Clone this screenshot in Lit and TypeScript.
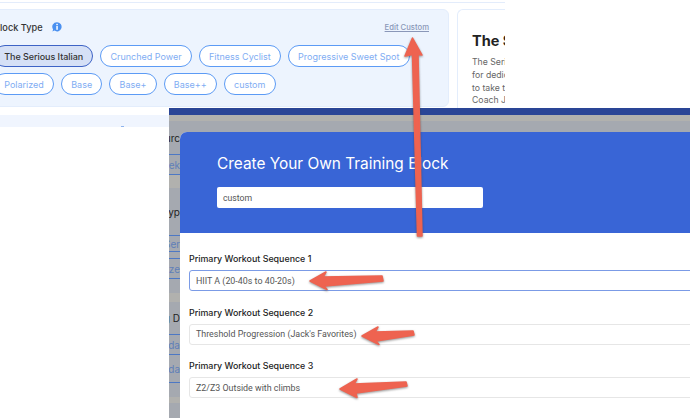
import { LitElement, css, html, svg } from "lit";
import { customElement } from "lit/decorators.js";

const row1 = ["The Serious Italian", "Crunched Power", "Fitness Cyclist", "Progressive Sweet Spot"];
const row2 = ["Polarized", "Base", "Base+", "Base++", "custom"];

const sequences = [
  { label: "Primary Workout Sequence 1", value: "HIIT A (20-40s to 40-20s)", focused: true },
  { label: "Primary Workout Sequence 2", value: "Threshold Progression (Jack's Favorites)", focused: false },
  { label: "Primary Workout Sequence 3", value: "Z2/Z3 Outside with climbs", focused: false },
];

const arrows = [
  "M412.5 38 L422 55 L418 54.5 L422 236 L417.5 236 L412.5 54.5 L405 56 Z",
  "M310 281 L326 272 L323 277 L382 276 L383 281 L324 286 L327 289.5 Z",
  "M362 336 L378 327 L375 332 L413 331 L414 335 L376 341 L379 344.5 Z",
  "M340 389 L357 379 L354 384 L406 382 L407 386 L356 393 L357 397.5 Z",
];

@customElement("app-root")
export class AppRoot extends LitElement {
  static styles = css`
    :host {
      display: block;
      width: 690px;
      height: 418px;
      background: #fff;
      overflow: hidden;
      position: relative;
      font-family: "Inter", "Liberation Sans", sans-serif;
    }
    .top-shot {
      width: 505px;
      height: 108px;
      overflow: hidden;
      display: flex;
      gap: 8px;
      padding-top: 9px;
      box-sizing: border-box;
      border-top: 1px solid transparent;
      position: relative;
    }
    .top-line {
      position: absolute;
      left: 0;
      top: 1px;
      width: 505px;
      height: 1px;
      background: #e3ecfb;
    }
    .panel {
      flex: none;
      width: 469px;
      height: 98px;
      margin-left: -20px;
      margin-top: -1px;
      box-sizing: border-box;
      padding: 10px 19px 0 13px;
      background: #edf4fe;
      border: 1px solid #e3edfc;
      border-radius: 6px;
    }
    .panel-head {
      display: flex;
      align-items: center;
      height: 15px;
      margin-bottom: 10px;
      color: #333;
      font-size: 9.2px;
      font-weight: 500;
    }
    .panel-head svg {
      margin-left: 9px;
      margin-top: -2px;
    }
    .edit {
      margin-left: auto;
      color: #8a97b8;
      font-size: 7.7px;
      font-weight: 500;
      text-decoration: underline;
    }
    .chips {
      display: flex;
      gap: 7px;
      margin-bottom: 6px;
    }
    .chip {
      height: 22px;
      box-sizing: border-box;
      padding: 0 9.2px;
      display: flex;
      align-items: center;
      border: 1.2px solid #5c9bf5;
      border-radius: 11px;
      background: #fff;
      color: #7fadf3;
      font-size: 9px;
      white-space: nowrap;
    }
    .chip.active {
      background: #d5e0f6;
      border-color: #3d63c6;
      color: #333;
      font-weight: 500;
      letter-spacing: -0.05px;
    }
    .detail {
      flex: none;
      width: 80px;
      height: 110px;
      margin-top: -1px;
      box-sizing: border-box;
      padding: 21px 0 0 14px;
      border: 1px solid #e3edfc;
      border-right: none;
      border-radius: 6px 0 0 0;
      overflow: hidden;
    }
    .detail h2 {
      margin: 0 0 5px;
      color: #222;
      font-size: 14.5px;
      line-height: 20px;
      font-weight: 700;
      white-space: nowrap;
    }
    .detail p {
      margin: 0;
      color: #666;
      font-size: 8.7px;
      line-height: 12.8px;
      white-space: nowrap;
    }
    .left-band {
      width: 169px;
      height: 12px;
      margin-top: 7px;
      box-sizing: border-box;
      padding: 11px 0 0 121px;
      background: #f0f5fe;
    }
    .left-band span {
      display: block;
      width: 3px;
      height: 1px;
      background: #8fb4ee;
    }
    .bottom-shot {
      position: absolute;
      left: 169px;
      top: 108px;
      width: 521px;
      height: 310px;
      overflow: hidden;
      background: #a5a9b0;
    }
    .bar {
      height: 7px;
      background: #2a4596;
    }
    .bar-grey {
      height: 6px;
      background: #b1b1ae;
    }
    .backdrop {
      width: 11px;
      display: flex;
      flex-direction: column;
      font-size: 10px;
    }
    .strip {
      box-sizing: border-box;
      display: flex;
      justify-content: flex-end;
      align-items: center;
      overflow: hidden;
      white-space: nowrap;
      color: #5f7fb8;
    }
    .strip.dark {
      color: #222;
    }
    .strip.lined {
      border-bottom: 1px solid #4d78c4;
    }
    .strip.light {
      background: #b1b1ae;
    }
    .modal {
      position: absolute;
      left: 11px;
      top: 24px;
      width: 520px;
      height: 300px;
      background: #fff;
      border-radius: 7px 0 0 0;
      overflow: hidden;
    }
    .modal-head {
      height: 101px;
      box-sizing: border-box;
      padding: 21px 0 0 37px;
      background: #3965d6;
    }
    .modal-head h1 {
      margin: 0 0 13px;
      color: #fff;
      font-size: 15.4px;
      line-height: 21px;
      font-weight: 400;
      white-space: nowrap;
    }
    .name {
      width: 266px;
      height: 21px;
      box-sizing: border-box;
      padding-left: 6px;
      display: flex;
      align-items: center;
      background: #fff;
      border-radius: 2px;
      color: #555;
      font-family: "Roboto", sans-serif;
      font-size: 8.7px;
    }
    .fields {
      padding: 18px 0 0 9px;
    }
    .field {
      height: 53.5px;
    }
    .field label {
      display: block;
      height: 18px;
      padding-top: 1px;
      color: #222;
      font-size: 8.9px;
      font-weight: 500;
      line-height: 14px;
      white-space: nowrap;
    }
    .select {
      width: 540px;
      height: 21px;
      box-sizing: border-box;
      padding-left: 6px;
      display: flex;
      align-items: center;
      border: 1px solid #e6e6e6;
      border-radius: 3px;
      color: #555;
      font-family: "Roboto", sans-serif;
      font-size: 8.9px;
      white-space: nowrap;
    }
    .select.focused {
      border: 1.5px solid #7b9be6;
    }
    .arrows {
      position: absolute;
      left: 0;
      top: 0;
      filter: drop-shadow(0 1px 1px rgba(60, 60, 60, 0.55));
    }
    .arrows path {
      fill: #ee6350;
      stroke: #ee6350;
      stroke-width: 1.5;
      stroke-linejoin: round;
    }
  `;

  render() {
    return html`
      <div class="top-shot">
        <div class="top-line"></div>
        <div class="panel">
          <div class="panel-head">
            Block Type
            <svg width="10" height="10" viewBox="0 0 10 10">
              <path d="M5 .2a4.6 4.6 0 1 1-2.6 8.4L.4 9.4l.7-2A4.6 4.6 0 0 1 5 .2z" fill="#4a90f0" />
              <rect x="4.3" y="1.8" width="1.5" height="1.4" fill="#fff" />
              <rect x="4.3" y="4" width="1.5" height="3.8" fill="#fff" />
            </svg>
            <span class="edit">Edit Custom</span>
          </div>
          <div class="chips">
            ${row1.map((c, i) => html`<span class="chip ${i === 0 ? "active" : ""}">${c}</span>`)}
          </div>
          <div class="chips">${row2.map((c) => html`<span class="chip">${c}</span>`)}</div>
        </div>
        <div class="detail">
          <h2>The Serious</h2>
          <p>The Serious Italian</p>
          <p>for dedicated riders</p>
          <p>to take their fitness</p>
          <p>Coach Jack</p>
        </div>
      </div>
      <div class="left-band"><span></span></div>
      <div class="bottom-shot">
        <div class="bar"></div>
        <div class="bar-grey"></div>
        <div class="backdrop">
          <div class="strip lined dark" style="height:34px">Sourc</div>
          <div class="strip lined" style="height:20px">Week</div>
          <div class="strip light" style="height:13px"></div>
          <div class="strip lined dark" style="height:48px">Block Typ</div>
          <div class="strip lined" style="height:16px">Ser</div>
          <div class="strip lined" style="height:7px"></div>
          <div class="strip lined" style="height:20px">Polarize</div>
          <div class="strip" style="height:14px"></div>
          <div class="strip light" style="height:9px"></div>
          <div class="strip lined dark" style="height:33px">Long D</div>
          <div class="strip lined" style="height:20px">Monda</div>
          <div class="strip lined" style="height:28px">Sunda</div>
          <div class="strip" style="height:14px"></div>
          <div class="strip light" style="height:6px"></div>
        </div>
        <div class="modal">
          <div class="modal-head">
            <h1>Create Your Own Training Block</h1>
            <div class="name">custom</div>
          </div>
          <div class="fields">
            ${sequences.map(
              (s) => html`
                <div class="field">
                  <label>${s.label}</label>
                  <div class="select ${s.focused ? "focused" : ""}">${s.value}</div>
                </div>
              `,
            )}
          </div>
        </div>
      </div>
      <svg class="arrows" width="690" height="418" viewBox="0 0 690 418">
        ${arrows.map((d) => svg`<path d=${d} />`)}
      </svg>
    `;
  }
}
